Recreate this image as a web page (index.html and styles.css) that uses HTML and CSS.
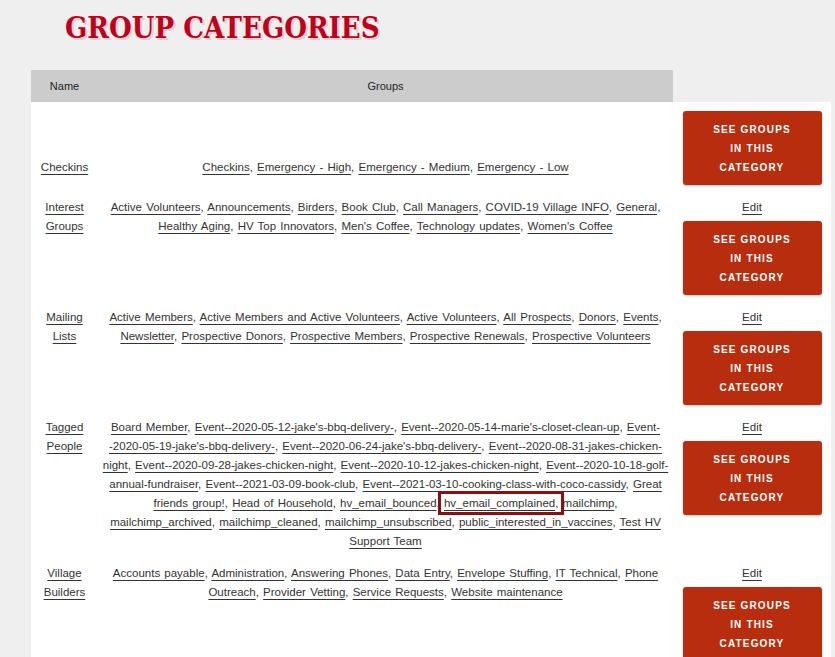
FILE: index.html
```html
<!DOCTYPE html>
<html lang="en">
<head>
<meta charset="utf-8">
<title>Group Categories</title>
<link rel="stylesheet" href="styles.css">
</head>
<body>
<div class="page">
  <h1 class="page-title">Group Categories</h1>
  <table class="categories">
    <colgroup>
      <col class="col-name">
      <col class="col-groups">
      <col class="col-actions">
    </colgroup>
    <thead>
      <tr>
        <th>Name</th>
        <th>Groups</th>
        <th class="blank"></th>
      </tr>
    </thead>
    <tbody>
      <tr>
        <td><a href="#">Checkins</a></td>
        <td class="group-list"><a href="#">Checkins</a>, <a href="#">Emergency - High</a>, <a href="#">Emergency - Medium</a>, <a href="#">Emergency - Low</a></td>
        <td><a class="btn" href="#">See groups in this category</a></td>
      </tr>
      <tr>
        <td><a href="#">Interest Groups</a></td>
        <td class="group-list"><a href="#">Active Volunteers</a>, <a href="#">Announcements</a>, <a href="#">Birders</a>, <a href="#">Book Club</a>, <a href="#">Call Managers</a>, <a href="#">COVID-19 Village INFO</a>, <a href="#">General</a>, <a href="#">Healthy Aging</a>, <a href="#">HV Top Innovators</a>, <a href="#">Men's Coffee</a>, <a href="#">Technology updates</a>, <a href="#">Women's Coffee</a></td>
        <td><a class="edit" href="#">Edit</a><a class="btn" href="#">See groups in this category</a></td>
      </tr>
      <tr>
        <td><a href="#">Mailing Lists</a></td>
        <td class="group-list"><a href="#">Active Members</a>, <a href="#">Active Members and Active Volunteers</a>, <a href="#">Active Volunteers</a>, <a href="#">All Prospects</a>, <a href="#">Donors</a>, <a href="#">Events</a>, <a href="#">Newsletter</a>, <a href="#">Prospective Donors</a>, <a href="#">Prospective Members</a>, <a href="#">Prospective Renewals</a>, <a href="#">Prospective Volunteers</a></td>
        <td><a class="edit" href="#">Edit</a><a class="btn" href="#">See groups in this category</a></td>
      </tr>
      <tr>
        <td><a href="#">Tagged People</a></td>
        <td class="group-list"><a href="#">Board Member</a>, <a href="#">Event--2020-05-12-jake's-bbq-delivery-</a>, <a href="#">Event--2020-05-14-marie's-closet-clean-up</a>, <a href="#">Event--2020-05-19-jake's-bbq-delivery-</a>, <a href="#">Event--2020-06-24-jake's-bbq-delivery-</a>, <a href="#">Event--2020-08-31-jakes-chicken-night</a>, <a href="#">Event--2020-09-28-jakes-chicken-night</a>, <a href="#">Event--2020-10-12-jakes-chicken-night</a>, <a href="#">Event--2020-10-18-golf-annual-fundraiser</a>, <a href="#">Event--2021-03-09-book-club</a>, <a href="#">Event--2021-03-10-cooking-class-with-coco-cassidy</a>, <a href="#">Great friends group!</a>, <a href="#">Head of Household</a>, <a href="#">hv_email_bounced</a>, <span class="flagged"><a href="#">hv_email_complained</a>,</span> <a href="#">mailchimp</a>, <a href="#">mailchimp_archived</a>, <a href="#">mailchimp_cleaned</a>, <a href="#">mailchimp_unsubscribed</a>, <a href="#">public_interested_in_vaccines</a>, <a href="#">Test HV Support Team</a></td>
        <td><a class="edit" href="#">Edit</a><a class="btn" href="#">See groups in this category</a></td>
      </tr>
      <tr>
        <td><a href="#">Village Builders</a></td>
        <td class="group-list"><a href="#">Accounts payable</a>, <a href="#">Administration</a>, <a href="#">Answering Phones</a>, <a href="#">Data Entry</a>, <a href="#">Envelope Stuffing</a>, <a href="#">IT Technical</a>, <a href="#">Phone Outreach</a>, <a href="#">Provider Vetting</a>, <a href="#">Service Requests</a>, <a href="#">Website maintenance</a></td>
        <td><a class="edit" href="#">Edit</a><a class="btn" href="#">See groups in this category</a></td>
      </tr>
    </tbody>
  </table>
</div>
</body>
</html>
```

FILE: styles.css
```css
* {
  box-sizing: border-box;
}

html,
body {
  margin: 0;
  background: #efefef;
}

body {
  font-family: "Liberation Sans", Arial, Helvetica, sans-serif;
  font-size: 11.5px;
  color: #333;
}

.page {
  padding: 0 4px 0 31px;
}

/* Slab-style page heading with a soft offset shadow */
.page-title {
  margin: 0;
  padding: 14px 0 27px 34px;
  font-family: "DejaVu Serif", serif;
  font-stretch: condensed;
  font-weight: bold;
  font-size: 29px;
  line-height: 29px;
  color: #c2001b;
  text-transform: uppercase;
  text-shadow: 2px 2px 0 #d4d4d4;
}

.categories {
  width: 800px;
  border-collapse: collapse;
  border-spacing: 0;
  table-layout: fixed;
}

.col-name {
  width: 67px;
}

.col-groups {
  width: 575px;
}

.col-actions {
  width: 158px;
}

.categories th {
  height: 32px;
  padding: 0 5px 1px;
  background: #cccccc;
  font-weight: normal;
  font-size: 11px;
  color: #222;
  text-align: center;
  vertical-align: middle;
}

.categories th.blank {
  background: transparent;
}

.categories tbody tr {
  background: #fff;
}

.categories td {
  padding: 6px 5px 7px;
  text-align: center;
  vertical-align: baseline;
  line-height: 19px;
}

.categories td.group-list {
  padding-left: 4px;
  padding-right: 4px;
  word-spacing: 1px;
}

.categories a {
  color: #333;
  text-decoration: underline;
  text-decoration-thickness: 1px;
  text-underline-offset: 3px;
}

.categories .edit {
  display: block;
  margin-bottom: 1px;
}

/* Red call-to-action; inline-block so the row lines up on its last line */
.categories .btn {
  display: inline-block;
  width: 139px;
  margin-top: 3px;
  padding: 8.5px 26px;
  background: #b72d0d;
  border-radius: 3px;
  box-shadow: 0 1px 2px rgba(0, 0, 0, 0.22);
  color: #fff;
  font-weight: bold;
  font-size: 10px;
  letter-spacing: 1.15px;
  word-spacing: 0;
  line-height: 19px;
  text-transform: uppercase;
  text-decoration: none;
}

/* Boxed entry in the tag list */
.flagged {
  outline: 3px solid #8c0f12;
  outline-offset: 3px;
}
```
